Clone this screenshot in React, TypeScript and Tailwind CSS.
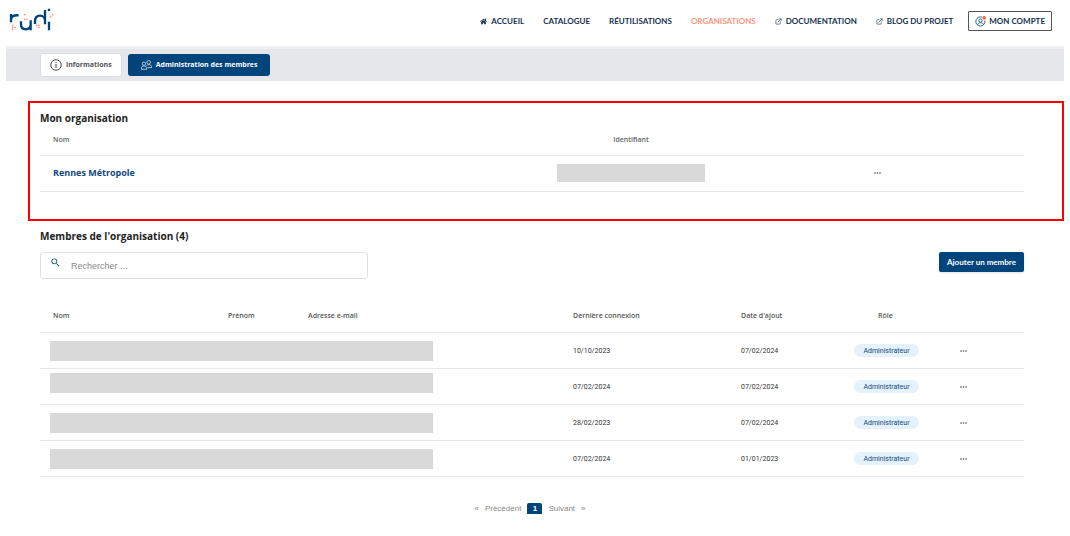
import React from "react";
import { FaHome } from "react-icons/fa";
import { FiExternalLink } from "react-icons/fi";
import { MdSearch } from "react-icons/md";

const members = [
  { lastLogin: "10/10/2023", added: "07/02/2024", role: "Administrateur", nameCell: "align-middle" },
  { lastLogin: "07/02/2024", added: "07/02/2024", role: "Administrateur", nameCell: "align-top pt-1" },
  { lastLogin: "28/02/2023", added: "07/02/2024", role: "Administrateur", nameCell: "align-middle" },
  { lastLogin: "07/02/2024", added: "01/01/2023", role: "Administrateur", nameCell: "align-middle" },
];

const logoDots = [
  [39, 76], [39, 82], [39, 88], [46, 82],
  [75, 44], [75, 58], [82, 58],
  [111, 76], [118, 76], [118, 82],
  [153, 50], [159, 44],
];

function Logo() {
  return (
    <svg viewBox="28 24 138 72" className="h-6 w-[46px]" role="img" aria-label="rudi">
      <g fill="none" stroke="#00447c" strokeWidth="7">
        <path d="M34 42V67M34 58C35 49 44 45 57 46" />
        <path d="M64 64V73C64 83 70 88 78 88C88 88 93 82 93 73M93 61V91" />
        <path d="M106 72V65C106 53 112 47 121 47C131 47 136 54 136 62M136 30V73" />
        <path d="M148 65V91M148 26V33" />
      </g>
      <g fill="#f79478">
        {logoDots.map(([x, y]) => (
          <circle key={`${x}-${y}`} cx={x} cy={y} r="2.6" />
        ))}
      </g>
    </svg>
  );
}

function AccountIcon() {
  return (
    <svg viewBox="0 0 24 24" className="size-[11px]" fill="none" stroke="#1d5a8e" strokeWidth="2" aria-hidden="true">
      <path d="M15 2.5A10 10 0 1 0 21.5 10" />
      <circle cx="12" cy="10" r="3.5" />
      <path d="M6 19C7 15.5 9 14.5 12 14.5S17 15.5 18 19" />
      <circle cx="20" cy="4" r="4" fill="#f4633a" stroke="none" />
    </svg>
  );
}

function InfoIcon() {
  return (
    <svg viewBox="0 0 24 24" className="size-3" fill="none" stroke="#333" strokeWidth="1.8" aria-hidden="true">
      <circle cx="12" cy="12" r="10.5" />
      <path d="M12 10V18M12 6V8" strokeWidth="2" />
    </svg>
  );
}

function MembersIcon() {
  return (
    <svg viewBox="0 0 33 30" className="h-[10px] w-[11px]" fill="none" stroke="#d5e2ee" strokeWidth="2.4" aria-hidden="true">
      <circle cx="9" cy="11" r="5" />
      <circle cx="23" cy="7" r="5.5" />
      <path d="M1.5 28V24C1.5 20 4 18 9 18S17 20 17 24V28ZM17 17C18 15 20 14 23 14C29 14 31.5 17 31.5 20V23H19" />
    </svg>
  );
}

function MoreButton() {
  return (
    <button type="button" aria-label="Actions" className="block">
      <svg viewBox="0 0 7 2" className="h-[2px] w-[7px]" fill="#444" aria-hidden="true">
        <circle cx="1" cy="1" r="0.8" />
        <circle cx="3.5" cy="1" r="0.8" />
        <circle cx="6" cy="1" r="0.8" />
      </svg>
    </button>
  );
}

export default function App() {
  return (
    <div className="min-h-screen bg-white px-[6px] pb-[20px] font-['Open_Sans',sans-serif] text-[7px] leading-[10px] text-[#333]">
      <header className="flex h-[46px] items-start justify-between pr-3 pl-[3px]">
        <a href="#accueil" className="pt-2">
          <Logo />
        </a>
        <nav className="flex items-center gap-[19px] pt-[11px] font-['Lato',sans-serif] text-[8px] font-bold text-[#14304d]">
          <a href="#accueil" className="flex items-center gap-1">
            <FaHome className="size-[7px]" />
            ACCUEIL
          </a>
          <a href="#catalogue">CATALOGUE</a>
          <a href="#reutilisations">RÉUTILISATIONS</a>
          <a href="#organisations" className="text-[#ff9579]">ORGANISATIONS</a>
          <a href="#documentation" className="flex items-center gap-1">
            <FiExternalLink className="size-[7px]" />
            DOCUMENTATION
          </a>
          <a href="#blog" className="flex items-center gap-1">
            <FiExternalLink className="size-[7px]" />
            BLOG DU PROJET
          </a>
          <button type="button" className="-ml-1 flex h-5 items-center gap-[3px] rounded-[1px] border border-[#555] px-[6px]">
            <AccountIcon />
            MON COMPTE
          </button>
        </nav>
      </header>

      <div className="flex items-center gap-[6px] border-t-[3px] border-[#f1f1f5] bg-[#e6e7eb] py-1 pl-[34px]">
        <button type="button" className="flex h-6 items-center gap-1 rounded-[3px] border border-[#dcdde1] bg-white px-[9px] font-bold text-[#555]">
          <InfoIcon />
          informations
        </button>
        <button type="button" className="flex h-[22px] items-center gap-1 rounded-[3px] bg-[#00447c] px-[13px] font-bold text-white">
          <MembersIcon />
          Administration des membres
        </button>
      </div>

      <main className="pt-5">
        <section className="ml-[22px] border-2 border-[#ff0000] pt-2 pr-[38px] pb-[27px] pl-[10px]">
          <h2 className="text-[10px] leading-[14px] font-bold text-[#222]">Mon organisation</h2>
          <table className="w-full table-fixed text-left">
            <colgroup>
              <col className="w-[425px]" />
              <col className="w-[332px]" />
              <col className="w-[227px]" />
            </colgroup>
            <thead>
              <tr className="h-[30px] border-b border-[#e8e8e8]">
                <th className="pl-[13px] font-semibold text-[#666]">Nom</th>
                <th className="text-center font-semibold text-[#666]">Identifiant</th>
                <th aria-label="Actions" />
              </tr>
            </thead>
            <tbody>
              <tr className="h-9 border-b border-[#e8e8e8]">
                <td className="pl-[13px] text-[9px] font-bold text-[#12487c]">Rennes Métropole</td>
                <td>
                  <div className="mx-auto h-[18px] w-[148px] bg-[#d9d9d9]" />
                </td>
                <td className="pl-[77px]">
                  <MoreButton />
                </td>
              </tr>
            </tbody>
          </table>
        </section>

        <section className="pt-2 pr-10 pl-[34px]">
          <h2 className="text-[10px] leading-[14px] font-bold text-[#222]">Membres de l'organisation (4)</h2>
          <div className="mt-[9px] flex items-start justify-between">
            <label className="flex h-[27px] w-1/3 items-start rounded-[3px] border border-[#dfe0e4] pl-[9px]">
              <MdSearch className="mt-1 size-[11px] text-[#12588f]" />
              <input
                type="text"
                aria-label="Rechercher"
                placeholder="Rechercher ..."
                className="h-full min-w-0 flex-1 bg-transparent pt-[2px] pl-[10px] font-['Liberation_Sans',sans-serif] text-[9px] outline-none placeholder:text-[#888]"
              />
            </label>
            <button type="button" className="h-5 rounded-[2px] bg-[#00447c] px-2 font-['Lato',sans-serif] text-[8px] font-bold text-white shadow-sm">
              Ajouter un membre
            </button>
          </div>

          <table className="mt-[21px] w-full table-fixed text-left">
            <colgroup>
              <col className="w-[188px]" />
              <col className="w-[80px]" />
              <col className="w-[265px]" />
              <col className="w-[168px]" />
              <col className="w-[113px]" />
              <col className="w-[106px]" />
              <col className="w-[64px]" />
            </colgroup>
            <thead>
              <tr className="h-[33px] border-b border-[#e8e8e8] text-[#555]">
                <th className="pl-[13px] font-semibold">Nom</th>
                <th className="font-semibold">Prénom</th>
                <th className="font-semibold">Adresse e-mail</th>
                <th className="font-semibold">Dernière connexion</th>
                <th className="font-semibold">Date d'ajout</th>
                <th className="pl-6 font-semibold">Rôle</th>
                <th aria-label="Actions" />
              </tr>
            </thead>
            <tbody className="font-['Roboto',sans-serif]">
              {members.map((member, index) => (
                <tr key={index} className="h-9 border-b border-[#e8e8e8]">
                  <td colSpan={3} className={member.nameCell}>
                    <div className="ml-[10px] h-5 w-[383px] bg-[#d9d9d9]" />
                  </td>
                  <td>{member.lastLogin}</td>
                  <td>{member.added}</td>
                  <td>
                    <span className="flex h-[13px] w-[65px] items-center justify-center rounded-full bg-[#e5f1fd] text-[#12487c]">
                      {member.role}
                    </span>
                  </td>
                  <td>
                    <MoreButton />
                  </td>
                </tr>
              ))}
            </tbody>
          </table>
        </section>

        <nav aria-label="Pagination" className="mt-[26px] flex items-center justify-center gap-[6px] pr-[10px] font-['Liberation_Sans',sans-serif] text-[8px] text-[#888]">
          <a href="#precedent" className="flex gap-[6px]">
            <span>«</span>
            <span>Précédent</span>
          </a>
          <a href="#page-1" aria-current="page" className="flex h-[11px] w-[15px] items-center justify-center rounded-t-[2px] bg-[#00447c] font-bold text-white">1</a>
          <a href="#suivant" className="flex gap-[6px]">
            <span>Suivant</span>
            <span>»</span>
          </a>
        </nav>
      </main>
    </div>
  );
}
